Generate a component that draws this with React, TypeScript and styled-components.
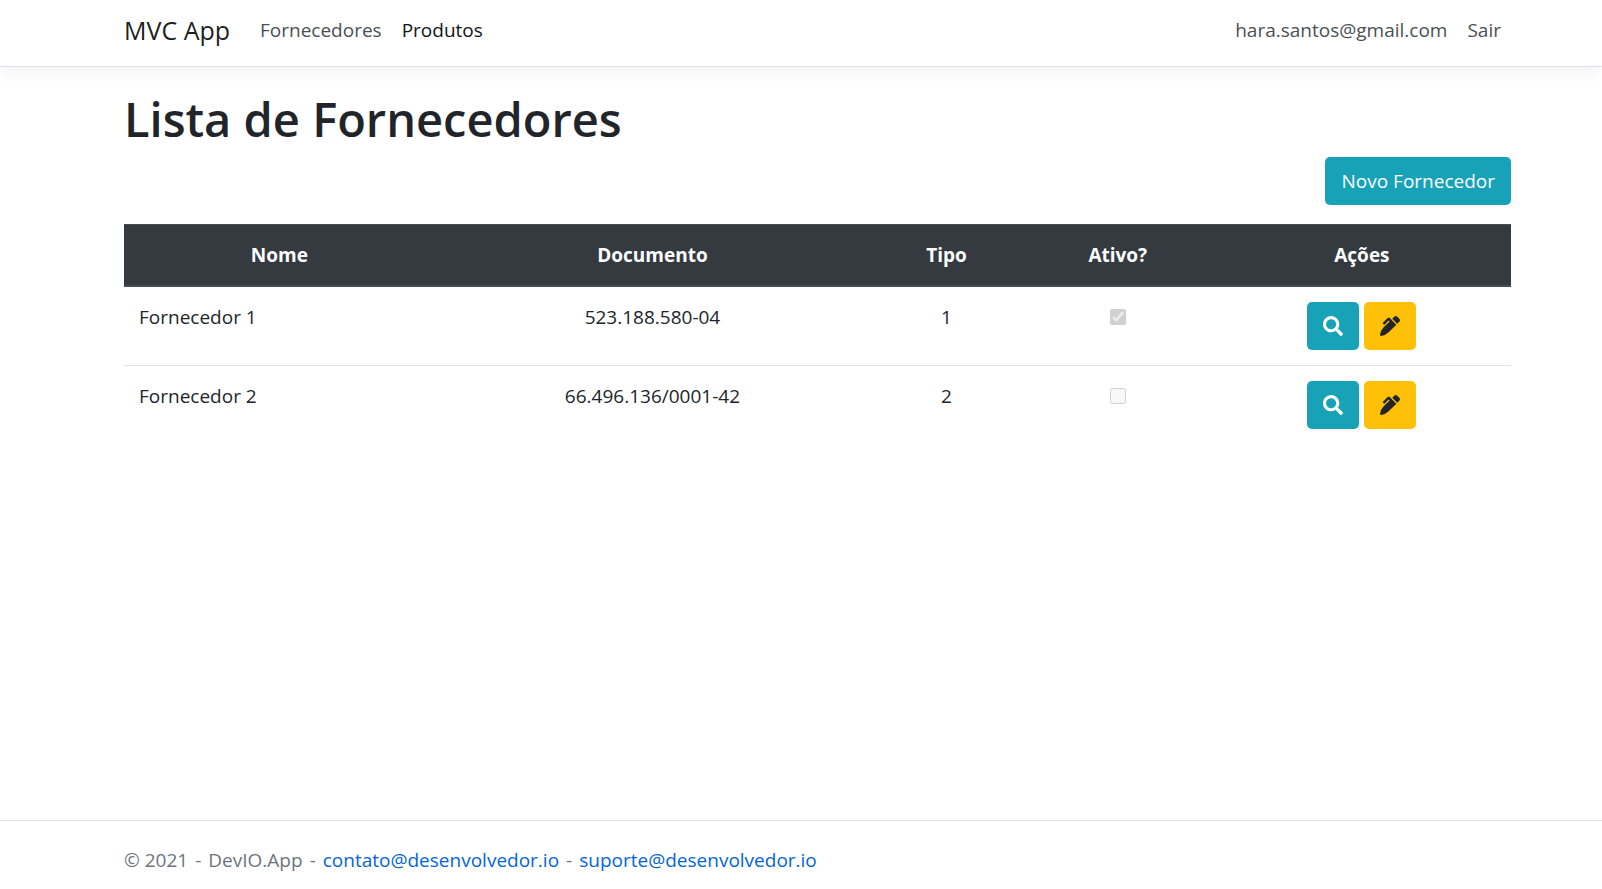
import React from "react";
import styled, { createGlobalStyle } from "styled-components";
import { FaPenAlt, FaSearch } from "react-icons/fa";

const GlobalStyle = createGlobalStyle`
  *, *::before, *::after { box-sizing: border-box; }
  body {
    margin: 0;
    background: #fff;
    color: #212529;
    font-family: "Segoe UI", "Open Sans", "Noto Sans", sans-serif;
    font-size: 19px;
    line-height: 30px;
  }
  a { text-decoration: none; }
`;

const Page = styled.div`
  display: flex;
  flex-direction: column;
  min-height: 100vh;
`;

const Header = styled.header`
  padding: 0 91px 0 124px;
  border-bottom: 1px solid #dee2e6;
  box-shadow: 0 5px 15px rgba(0, 0, 0, 0.05);
`;

const Navbar = styled.nav`
  display: flex;
  align-items: center;
  height: 66px;
  padding-bottom: 6px;
`;

const Brand = styled.a`
  margin-right: 30px;
  font-size: 25px;
  color: rgba(0, 0, 0, 0.9);
`;

const NavList = styled.ul`
  display: flex;
  gap: 20px;
  margin: 0;
  padding: 0;
  list-style: none;
`;

const AccountList = styled(NavList)`
  margin-left: auto;
  padding-right: 10px;
`;

const NavLink = styled.a<{ $strong?: boolean }>`
  color: ${(p) => (p.$strong ? "#111416" : "#4b4f53")};
`;

const SignOut = styled.button`
  padding: 0;
  border: 0;
  background: none;
  color: #4b4f53;
  font: inherit;
  cursor: pointer;
`;

const Main = styled.main`
  flex: 1;
  padding: 22px 91px 20px 124px;
`;

const Title = styled.h1`
  margin: 0 0 8px;
  font-size: 47px;
  font-weight: 600;
  line-height: 60px;
`;

const Toolbar = styled.div`
  display: flex;
  justify-content: flex-end;
  margin-bottom: 19px;
`;

const ActionButton = styled.button<{ $tone: "info" | "warning" }>`
  display: inline-flex;
  align-items: center;
  justify-content: center;
  height: 48px;
  padding: 0 16px;
  border: 0;
  border-radius: 5px;
  background: ${(p) => (p.$tone === "info" ? "#17a2b8" : "#ffc107")};
  color: ${(p) => (p.$tone === "info" ? "#fff" : "#212529")};
  font: inherit;
  cursor: pointer;

  svg { width: 20px; height: 20px; }
`;

const Table = styled.table`
  width: 100%;
  table-layout: fixed;
  border-collapse: collapse;
`;

const HeadCell = styled.th<{ $width: string }>`
  width: ${(p) => p.$width};
  height: 61px;
  padding: 0 15px;
  border-top: 1px solid #454d55;
  border-bottom: 2px solid #454d55;
  background: #343a40;
  color: #fff;
  font-weight: 700;
  text-align: center;
`;

const Row = styled.tr`
  & + & { border-top: 1px solid #dee2e6; }
`;

const Cell = styled.td<{ $align?: "left" | "center" }>`
  padding: 15px;
  text-align: ${(p) => p.$align ?? "center"};
  vertical-align: top;
`;

const Actions = styled.div`
  display: flex;
  justify-content: center;
  gap: 5px;
`;

const Check = styled.input`
  display: block;
  width: 16px;
  height: 16px;
  margin: 7px auto 0;
`;

const Footer = styled.footer`
  display: flex;
  flex-wrap: wrap;
  gap: 0 7px;
  padding: 24px 91px 14px 124px;
  border-top: 1px solid #dee2e6;
  color: #6c757d;
`;

const MailLink = styled.a`
  color: #0366d6;
`;

const columns = [
  { label: "Nome", width: "22.4%" },
  { label: "Documento", width: "31.4%" },
  { label: "Tipo", width: "11%" },
  { label: "Ativo?", width: "13.7%" },
  { label: "Ações", width: "21.5%" },
];

const suppliers = [
  { name: "Fornecedor 1", document: "523.188.580-04", type: 1, active: true },
  { name: "Fornecedor 2", document: "66.496.136/0001-42", type: 2, active: false },
];

export default function App() {
  return (
    <Page>
      <GlobalStyle />
      <Header>
        <Navbar>
          <Brand href="#">MVC App</Brand>
          <NavList>
            <li><NavLink href="#fornecedores">Fornecedores</NavLink></li>
            <li><NavLink href="#produtos" $strong>Produtos</NavLink></li>
          </NavList>
          <AccountList>
            <li><NavLink href="#conta">hara.santos@gmail.com</NavLink></li>
            <li><SignOut type="button">Sair</SignOut></li>
          </AccountList>
        </Navbar>
      </Header>
      <Main>
        <Title>Lista de Fornecedores</Title>
        <Toolbar>
          <ActionButton type="button" $tone="info">Novo Fornecedor</ActionButton>
        </Toolbar>
        <Table>
          <thead>
            <tr>
              {columns.map((c) => (
                <HeadCell key={c.label} scope="col" $width={c.width}>{c.label}</HeadCell>
              ))}
            </tr>
          </thead>
          <tbody>
            {suppliers.map((s) => (
              <Row key={s.name}>
                <Cell $align="left">{s.name}</Cell>
                <Cell>{s.document}</Cell>
                <Cell>{s.type}</Cell>
                <Cell>
                  <Check type="checkbox" checked={s.active} disabled readOnly aria-label={`${s.name} ativo`} />
                </Cell>
                <Cell>
                  <Actions>
                    <ActionButton type="button" $tone="info" aria-label={`Detalhes de ${s.name}`}>
                      <FaSearch />
                    </ActionButton>
                    <ActionButton type="button" $tone="warning" aria-label={`Editar ${s.name}`}>
                      <FaPenAlt />
                    </ActionButton>
                  </Actions>
                </Cell>
              </Row>
            ))}
          </tbody>
        </Table>
      </Main>
      <Footer>
        <span>© 2021</span>
        <span>-</span>
        <span>DevIO.App</span>
        <span>-</span>
        <MailLink href="mailto:contato@desenvolvedor.io">contato@desenvolvedor.io</MailLink>
        <span>-</span>
        <MailLink href="mailto:suporte@desenvolvedor.io">suporte@desenvolvedor.io</MailLink>
      </Footer>
    </Page>
  );
}
